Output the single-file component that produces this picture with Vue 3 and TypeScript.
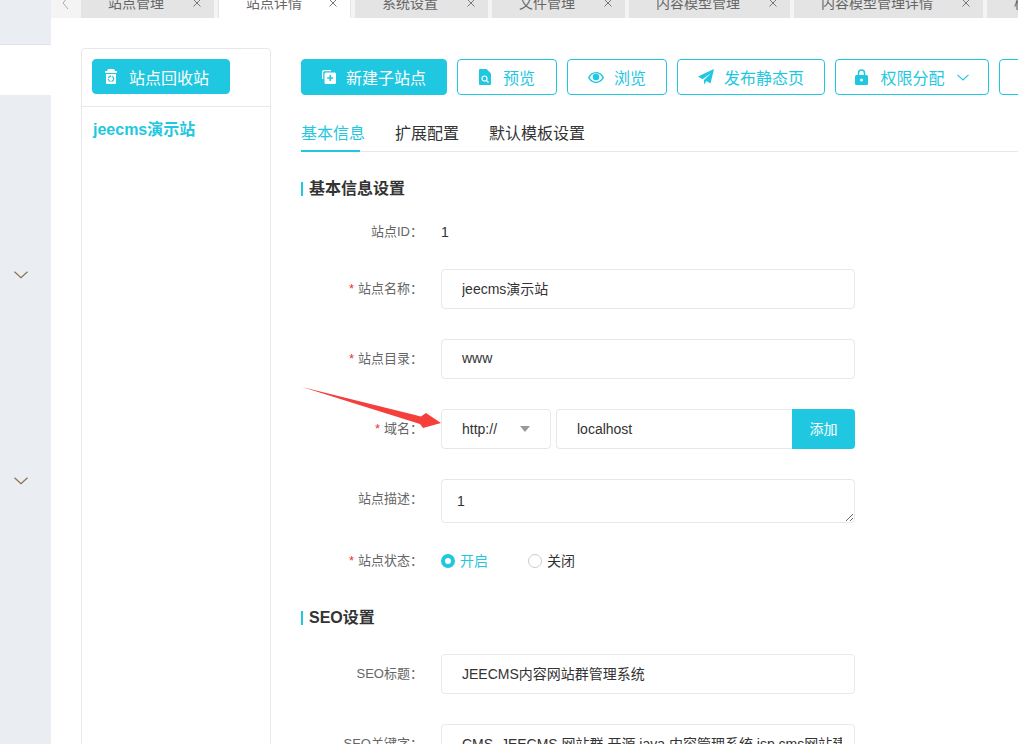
<script setup lang="ts">
interface Tab { name: string; width: number; active?: boolean }
const tabs: Tab[] = [
  { name: '站点管理', width: 133 },
  { name: '站点详情', width: 133, active: true },
  { name: '系统设置', width: 133 },
  { name: '文件管理', width: 133 },
  { name: '内容模型管理', width: 161 },
  { name: '内容模型管理详情', width: 189 },
  { name: '模板管理', width: 133 },
]
const subTabs = ['基本信息', '扩展配置', '默认模板设置']
</script>

<template>
  <div class="page">
    <aside class="rail">
      <div class="rail-top"></div>
      <div class="rail-band"></div>
      <div class="rail-rest">
        <svg class="rail-chev first" width="14" height="8" viewBox="0 0 14 8"><path d="M.5.8 7 6.800 13.500.8" fill="none" stroke="#8a6f50" stroke-width="1.200"/></svg>
        <svg class="rail-chev second" width="14" height="8" viewBox="0 0 14 8"><path d="M.5.8 7 6.800 13.500.8" fill="none" stroke="#8a6f50" stroke-width="1.200"/></svg>
      </div>
    </aside>

    <div class="main">
      <nav class="tabbar">
        <div class="tab-prev">
          <svg width="8" height="10" viewBox="0 0 8 10"><path d="M6-3 1 3 6 9" fill="none" stroke="#aaa" stroke-width="1"/></svg>
        </div>
        <div v-for="t in tabs" :key="t.name" class="tab" :class="{ active: t.active }" :style="{ width: t.width + 'px' }">
          <span class="tab-name">{{ t.name }}</span>
          <svg class="tab-x" width="8" height="8" viewBox="0 0 8 8"><path d="M.5.5l7 7M7.500.5l-7 7" stroke="#777" stroke-width="1" fill="none"/></svg>
        </div>
      </nav>

      <div class="content">
        <section class="sites">
          <div class="sites-head">
            <button class="btn primary recycle">
              <svg width="12" height="15" viewBox="0 0 12 15"><path fill="#fff" d="M3 0h6l1 2h2v2H0V2h2zM1 5h10v9a1 1 0 0 1-1 1H2a1 1 0 0 1-1-1z"/><circle cx="6" cy="9.800" r="2.700" fill="none" stroke="#1fc7e0" stroke-width="1.200" stroke-dasharray="3.500 1"/></svg>
              <span>站点回收站</span>
            </button>
          </div>
          <div class="site-name">jeecms演示站</div>
        </section>

        <section class="detail">
          <div class="toolbar">
            <button class="btn primary w146">
              <svg width="14" height="14" viewBox="0 0 14 14"><path d="M9 .6H2A1.400 1.400 0 0 0 .6 2v7" fill="none" stroke="#fff" stroke-width="1.200"/><rect x="2.500" y="2.500" width="11.500" height="11.500" rx="1.500" fill="#fff"/><path d="M8.250 5v6M5.250 8h6" stroke="#1fc7e0" stroke-width="1.600"/></svg>
              <span>新建子站点</span>
            </button>
            <button class="btn outline w100 wide-gap">
              <svg width="12" height="16" viewBox="0 0 12 16"><path fill="#1fc7e0" d="M1 0h6.500L12 4.500V15a1 1 0 0 1-1 1H1a1 1 0 0 1-1-1V1a1 1 0 0 1 1-1z"/><circle cx="5.500" cy="9.500" r="2.500" fill="none" stroke="#fff" stroke-width="1.200"/><path d="m7.500 11.500 2 2" stroke="#fff" stroke-width="1.200"/></svg>
              <span>预览</span>
            </button>
            <button class="btn outline w100">
              <svg width="16" height="11" viewBox="0 0 16 11"><path fill="#1fc7e0" fill-rule="evenodd" d="M8 0c3.600 0 6.500 2.300 8 5.500C14.500 8.700 11.600 11 8 11S1.500 8.700 0 5.500C1.500 2.300 4.400 0 8 0zm0 1.300C5.300 1.300 3 3 1.600 5.500 3 8 5.300 9.700 8 9.700s5-1.700 6.400-4.200C13 3 10.700 1.300 8 1.300z"/><circle cx="8" cy="5" r="3.300" fill="#1fc7e0"/></svg>
              <span>浏览</span>
            </button>
            <button class="btn outline w148">
              <svg width="16" height="16" viewBox="0 0 16 16"><path fill="#1fc7e0" d="M16 0 12.500 14.500 8.500 12 6 15.500V11l7-7-8.500 6.300L0 7.500z"/></svg>
              <span>发布静态页</span>
            </button>
            <button class="btn outline w154 wide-gap">
              <svg width="13" height="16" viewBox="0 0 13 16"><path fill="none" stroke="#1fc7e0" stroke-width="1.500" d="M3.500 7V4a3 3 0 0 1 6 0v3"/><rect y="6" width="13" height="10" rx="1.500" fill="#1fc7e0"/><circle cx="6.500" cy="11" r="1.500" fill="#fff"/></svg>
              <span>权限分配</span>
              <svg width="12" height="7" viewBox="0 0 12 7"><path d="M.5.800 6 6 11.500.8" fill="none" stroke="#1fc7e0" stroke-width="1.100"/></svg>
            </button>
            <button class="btn outline w100"></button>
          </div>

          <div class="subtabs">
            <div v-for="(s, i) in subTabs" :key="s" class="subtab" :class="{ on: i === 0 }">{{ s }}</div>
          </div>

          <h3 class="sec first-sec">基本信息设置</h3>

          <div class="row short row-id">
            <label class="lbl">站点ID：</label>
            <span class="val">1</span>
          </div>
          <div class="row">
            <label class="lbl"><i>*</i>站点名称：</label>
            <input class="inp" value="jeecms演示站" readonly />
          </div>
          <div class="row">
            <label class="lbl"><i>*</i>站点目录：</label>
            <input class="inp" value="www" readonly />
          </div>
          <div class="row">
            <label class="lbl"><i>*</i>域名：</label>
            <div class="domain">
              <div class="select">
                <span>http://</span>
                <b class="caret"></b>
              </div>
              <div class="host">
                <input class="host-inp" value="localhost" readonly />
                <button class="add">添加</button>
              </div>
            </div>
          </div>
          <div class="row desc">
            <label class="lbl">站点描述：</label>
            <textarea class="area" readonly>1</textarea>
          </div>
          <div class="row short row-status">
            <label class="lbl"><i>*</i>站点状态：</label>
            <div class="radios">
              <span class="radio on"><b></b>开启</span>
              <span class="radio"><b></b>关闭</span>
            </div>
          </div>

          <h3 class="sec">SEO设置</h3>
          <div class="row">
            <label class="lbl">SEO标题：</label>
            <input class="inp" value="JEECMS内容网站群管理系统" readonly />
          </div>
          <div class="row">
            <label class="lbl">SEO关键字：</label>
            <input class="inp" value="CMS, JEECMS,网站群,开源,java,内容管理系统,jsp,cms网站建设" readonly />
          </div>
        </section>
      </div>
    </div>

    <svg class="arrow" width="142" height="50" viewBox="0 0 142 50">
      <path fill="#f43f3a" d="M1 7 120 36.500 125 33 140 43 122 48 119 44z"/>
    </svg>
  </div>
</template>

<style>
html, body { margin: 0; background: #fff; }
</style>

<style scoped>
.page {
  position: relative;
  display: flex;
  width: 1018px;
  height: 744px;
  overflow: hidden;
  font-family: "Liberation Sans", "Noto Sans CJK SC", sans-serif;
  color: #333;
  font-size: 14px;
}
.rail { width: 51px; flex: none; display: flex; flex-direction: column; }
.rail-top { height: 44px; background: #eaedf1; border-bottom: 1px solid #e0e3e6; }
.rail-band { height: 50px; background: #fff; }
.rail-rest { flex: 1; background: #eaedf1; display: flex; flex-direction: column; align-items: flex-start; }
.rail-chev { margin-left: 14px; }
.rail-chev.first { margin-top: 176px; }
.rail-chev.second { margin-top: 198px; }

.main { flex: 1; min-width: 0; display: flex; flex-direction: column; }
.tabbar {
  display: flex;
  height: 18px;
  flex: none;
  gap: 4px;
  align-items: flex-end;
  overflow: hidden;
  background: #f4f4f4;
}
.tab-prev { width: 26px; flex: none; height: 18px; padding-left: 11px; box-sizing: border-box; }
.tab-prev svg { display: block; }
.tab {
  flex: none;
  height: 32px;
  display: flex;
  align-items: center;
  padding-left: 27px;
  position: relative;
  background: #e4e4e4;
  color: #666;
  box-sizing: border-box;
  font-size: 14px;
}
.tab.active { background: #fff; border-left: 1px solid #e4e4e4; border-right: 1px solid #e4e4e4; }
.tab-x { position: absolute; right: 13px; top: 13px; }

.content { flex: 1; display: flex; padding: 30px 0 0 30px; min-height: 0; }
.sites {
  width: 190px;
  flex: none;
  height: 720px;
  box-sizing: border-box;
  border: 1px solid #e8e8e8;
  border-radius: 4px 4px 0 0;
}
.sites-head { padding: 10px 10px 12px; border-bottom: 1px solid #e8e8e8; }
.site-name { padding: 12px 11px; font-size: 16px; line-height: 22px; font-weight: 700; color: #1fc7e0; }

.btn {
  height: 36px;
  box-sizing: border-box;
  display: flex;
  align-items: center;
  justify-content: center;
  gap: 10px;
  border-radius: 4px;
  font: inherit;
  font-size: 16px;
  padding: 0;
  flex: none;
}
.primary { background: #1fc7e0; border: 1px solid #1fc7e0; color: #fff; }
.outline { background: #fff; border: 1px solid #1fc7e0; color: #1fc7e0; }
.recycle { width: 138px; height: 35px; gap: 12px; justify-content: flex-start; padding-left: 12px; }
.w146 { width: 146px; }
.w100 { width: 100px; }
.w148 { width: 148px; }
.w154 { width: 154px; }
.wide-gap { gap: 12px; }

.detail { margin-left: 30px; flex: 1; min-width: 0; padding-top: 11px; }
.toolbar { display: flex; gap: 10px; height: 36px; }
.subtabs {
  display: flex;
  gap: 30px;
  margin-top: 17px;
  height: 40px;
  box-sizing: border-box;
  border-bottom: 1px solid #e8e8e8;
}
.subtab { font-size: 16px; line-height: 44px; height: 40px; color: #333; position: relative; white-space: nowrap; }
.subtab.on { color: #1fc7e0; }
.subtab.on::after {
  content: "";
  position: absolute;
  left: 0;
  bottom: 0;
  width: 59px;
  height: 2px;
  background: #1fc7e0;
}

.sec {
  margin: 0 0 29px;
  padding-left: 6px;
  border-left: 2px solid #1fc7e0;
  font-size: 16px;
  line-height: 14px;
  font-weight: 700;
  color: #333;
}
.first-sec { margin-top: 30px; margin-bottom: 26px; }

.row { display: flex; align-items: center; min-height: 40px; margin-bottom: 30px; width: 554px; }
.short { height: 20px; min-height: 20px; }
.row-id { margin-bottom: 27px; }
.row-status { margin-bottom: 40px; }
.desc { align-items: flex-start; margin-bottom: 28px; }
.desc .lbl { line-height: 40px; padding-bottom: 0; }
.lbl {
  width: 122px;
  margin-right: 18px;
  padding-bottom: 1px;
  line-height: 16px;
  flex: none;
  text-align: right;
  color: #666;
  font-size: 13px;
  white-space: nowrap;
}
.lbl i { color: #e33; font-style: normal; margin-right: 4px; }
.val { color: #333; }
.inp, .area, .host-inp {
  font: inherit;
  color: #333;
  outline: none;
  box-sizing: border-box;
}
.inp {
  width: 414px;
  height: 40px;
  border: 1px solid #e8e8e8;
  border-radius: 4px;
  padding: 0 12px 2px 20px;
  text-overflow: clip;
}
.area {
  display: block;
  width: 414px;
  height: 44px;
  border: 1px solid #e8e8e8;
  border-radius: 4px;
  padding: 11px 15px;
  line-height: 20px;
  resize: vertical;
}
.domain { display: flex; width: 414px; gap: 5px; }
.select {
  width: 110px;
  height: 40px;
  box-sizing: border-box;
  border: 1px solid #e8e8e8;
  border-radius: 4px;
  padding: 0 20px;
  display: flex;
  align-items: center;
  justify-content: space-between;
  flex: none;
}
.caret {
  width: 0;
  height: 0;
  border-left: 5px solid transparent;
  border-right: 5px solid transparent;
  border-top: 6px solid #999;
}
.host { flex: 1; display: flex; height: 40px; min-width: 0; }
.host-inp {
  flex: 1;
  min-width: 0;
  height: 40px;
  border: 1px solid #e8e8e8;
  border-right: none;
  border-radius: 4px 0 0 4px;
  padding: 0 20px;
}
.add {
  width: 63px;
  flex: none;
  border: none;
  background: #1fc7e0;
  color: #fff;
  font: inherit;
  border-radius: 0 4px 4px 0;
  padding: 0 0 2px;
}
.radios { display: flex; gap: 40px; }
.radio { display: flex; align-items: center; gap: 5px; color: #333; font-size: 14px; line-height: 20px; }
.radio b {
  width: 14px;
  height: 14px;
  box-sizing: border-box;
  border: 1px solid #ccc;
  border-radius: 50%;
  background: #fff;
  display: block;
}
.radio.on { color: #1fc7e0; }
.radio.on b { border: 4px solid #1fc7e0; }

.arrow { position: absolute; left: 301px; top: 380px; }
</style>
